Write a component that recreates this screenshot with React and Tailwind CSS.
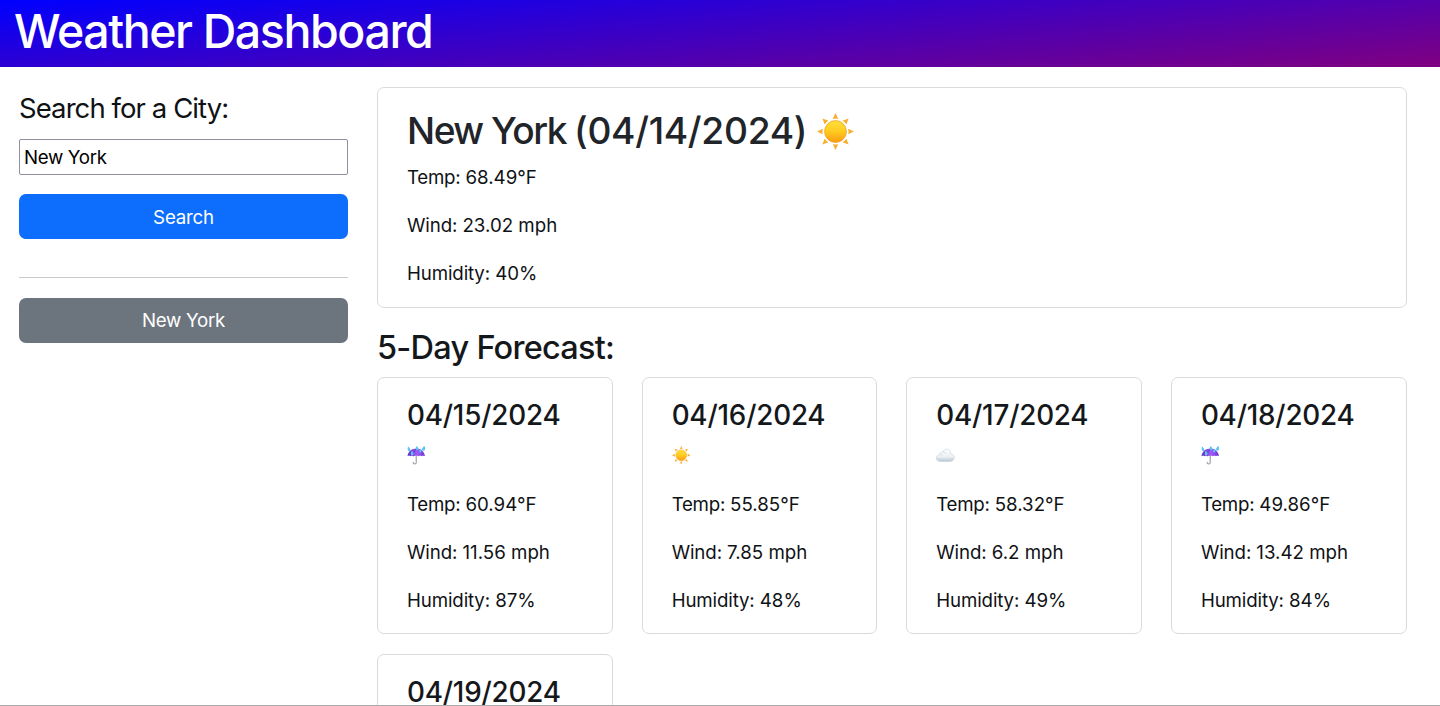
function Sun({ className, id }) {
  return (
    <svg className={className} viewBox="0 0 36 36" aria-label="Sunny">
      <defs>
        <linearGradient id={id} x1="0" y1="0" x2="0" y2="1">
          <stop offset="0" stopColor="#ffe03c" />
          <stop offset="0.5" stopColor="#ffcb1f" />
          <stop offset="1" stopColor="#fb9b13" />
        </linearGradient>
      </defs>
      {[0, 45, 90, 135, 180, 225, 270, 315].map((angle) => (
        <path
          key={angle}
          d="M18 0 L20.700 5.800 Q18 4.800 15.300 5.800Z"
          fill="#f9ae2b"
          transform={`rotate(${angle} 18 18)`}
        />
      ))}
      <circle cx="18" cy="18" r="10.600" fill={`url(#${id})`} stroke="#ee9a1c" strokeWidth="0.7" />
    </svg>
  );
}

function Umbrella({ className, id }) {
  return (
    <svg className={className} viewBox="0 0 36 36" aria-label="Rain">
      <defs>
        <linearGradient id={id} x1="0" y1="0" x2="1" y2="0">
          <stop offset="0" stopColor="#5a2fc4" />
          <stop offset="0.55" stopColor="#a25cf8" />
          <stop offset="1" stopColor="#6c34cf" />
        </linearGradient>
      </defs>
      <path d="M18 18V32a3 3 0 0 1-6 0" fill="none" stroke="#a3a4a9" strokeWidth="2.4" strokeLinecap="round" />
      <path
        d="M1 20C2 11 9 5 18 5s16 6 17 15c-2-1.200-4-1.200-6 0-2-1.200-4-1.200-6 0-3-1.200-7-1.200-10 0-2-1.200-4-1.200-6 0-2-1.200-4-1.200-6 0Z"
        fill={`url(#${id})`}
      />
      <path d="M12 20C12 13 14 9 18 6" fill="none" stroke="#4e22ad" strokeWidth="1" />
      <g fill="#5cc3f5">
        <path d="M2 1c4 3 6 8 3 9S0 7 2 1Z" />
        <path d="M18 0c5 3 6 7 3 8s-5-2-3-8Z" />
        <path d="M34 0c-5 3-6 8-3 9s6-3 3-9Z" />
        <path d="M9 9c5 4 5 8 2 9s-5-3-2-9Z" />
        <path d="M27 5c-4 3-4 7-2 8s5-3 2-8Z" />
      </g>
    </svg>
  );
}

function Cloud({ className, id }) {
  return (
    <svg className={className} viewBox="0 0 36 36" aria-label="Cloudy">
      <defs>
        <linearGradient id={id} x1="0" y1="0" x2="0" y2="1">
          <stop offset="0" stopColor="#fbfcfd" />
          <stop offset="0.6" stopColor="#eef2f5" />
          <stop offset="1" stopColor="#b9c7d2" />
        </linearGradient>
      </defs>
      <path
        d="M8 30C3 30 .500 27 .500 23.500S3 17.500 7 17c0-4 3-6.500 7-5.500C15 7.500 18 6 21 6c5 0 8 4 7.500 9 4 .5 7 3 7 7.500 0 5-3.500 7.500-8 7.500Z"
        fill={`url(#${id})`}
        stroke="#c6d0d8"
        strokeWidth="1.1"
      />
      <path d="M7 17c3-.5 5 .5 6 2M14 11.500c3 0 5 1.500 5.500 4" fill="none" stroke="#c9d3db" strokeWidth="1.2" />
    </svg>
  );
}

const icons = { sun: Sun, rain: Umbrella, cloud: Cloud };

const days = [
  { date: "04/15/2024", icon: "rain", temp: "60.94", wind: "11.56", humidity: "87" },
  { date: "04/16/2024", icon: "sun", temp: "55.85", wind: "7.85", humidity: "48" },
  { date: "04/17/2024", icon: "cloud", temp: "58.32", wind: "6.2", humidity: "49" },
  { date: "04/18/2024", icon: "rain", temp: "49.86", wind: "13.42", humidity: "84" },
  { date: "04/19/2024" },
];

function Readings({ temp, wind, humidity }) {
  return (
    <div className="flex flex-col gap-[19px] leading-[29px] text-[#0f1215]">
      <p>
        <span className="tracking-[-0.25px]">Temp: </span>
        {temp}°F
      </p>
      <p>
        <span className="tracking-[-0.1px]">Wind: </span>
        {wind} mph
      </p>
      <p>
        <span className="tracking-[-0.13px]">Humidity: </span>
        {humidity}%
      </p>
    </div>
  );
}

function DayCard({ day }) {
  const Icon = icons[day.icon];
  return (
    <article className="h-[257px] rounded-[7px] border border-[#dadbdc] px-[29px] pt-[19px]">
      <h3 className="text-[27.800px] leading-[36px] font-medium tracking-[-0.2px] text-[#15181b]">{day.date}</h3>
      {Icon && (
        <>
          <div className="mt-[13px] mb-[25px] h-[19px]">
            <Icon id={`icon-${day.date.replaceAll("/", "")}`} className="size-[18.500px]" />
          </div>
          <Readings {...day} />
        </>
      )}
    </article>
  );
}

export default function App() {
  return (
    <div className="flex h-[706px] flex-col overflow-hidden border-b border-[#a9a9a9] bg-white font-['Inter','Liberation_Sans',sans-serif] text-[18.700px] text-[#212529]">
      <header className="h-[67px] shrink-0 bg-[linear-gradient(175deg,#0000ff,#800080)] px-[14px]">
        <h1 className="text-[46.500px] leading-[62px] font-medium tracking-[-1.42px] text-white">Weather Dashboard</h1>
      </header>
      <main className="flex min-h-0 flex-1 gap-[29px] pt-5 pl-[19px]">
        <aside className="w-[329px] shrink-0">
          <h2 className="text-[27.500px] leading-[43px] tracking-[-0.92px] text-[#0f1215]">Search for a City:</h2>
          <input
            defaultValue="New York"
            className="mt-[9px] block h-[36px] w-full rounded-[2px] border border-[#8f8f9d] px-1 tracking-[-0.33px] text-black outline-none"
          />
          <button className="mt-[19px] block h-[45px] w-full rounded-[7px] bg-[#0d6efd] pt-[3px] tracking-[-0.2px] text-white">
            Search
          </button>
          <hr className="mt-[38px] border-t border-[#c8c9ca]" />
          <button className="mt-5 block h-[45px] w-full rounded-[7px] bg-[#6c757d] pt-[2px] tracking-[-0.25px] text-white">
            New York
          </button>
        </aside>
        <section className="w-[1029.500px] shrink-0">
          <article className="h-[221px] rounded-[7px] border border-[#dadbdc] px-[29px] pt-[20px]">
            <h2 className="flex items-center text-[37.200px] leading-[46px] font-medium">
              <span className="tracking-[-1.5px]">New York</span>
              <span className="ml-[8px] tracking-[-0.3px]">(04/14/2024)</span>
              <Sun id="icon-today" className="ml-[10px] size-[37px]" />
            </h2>
            <div className="mt-[9px]">
              <Readings temp="68.49" wind="23.02" humidity="40" />
            </div>
          </article>
          <h2 className="mt-[20px] text-[32.500px] leading-[40px] font-medium tracking-[-0.75px] text-[#15181b]">
            5-Day Forecast:
          </h2>
          <div className="mt-[9px] grid grid-cols-4 gap-x-[29px] gap-y-[20px]">
            {days.map((day) => (
              <DayCard key={day.date} day={day} />
            ))}
          </div>
        </section>
      </main>
    </div>
  );
}
